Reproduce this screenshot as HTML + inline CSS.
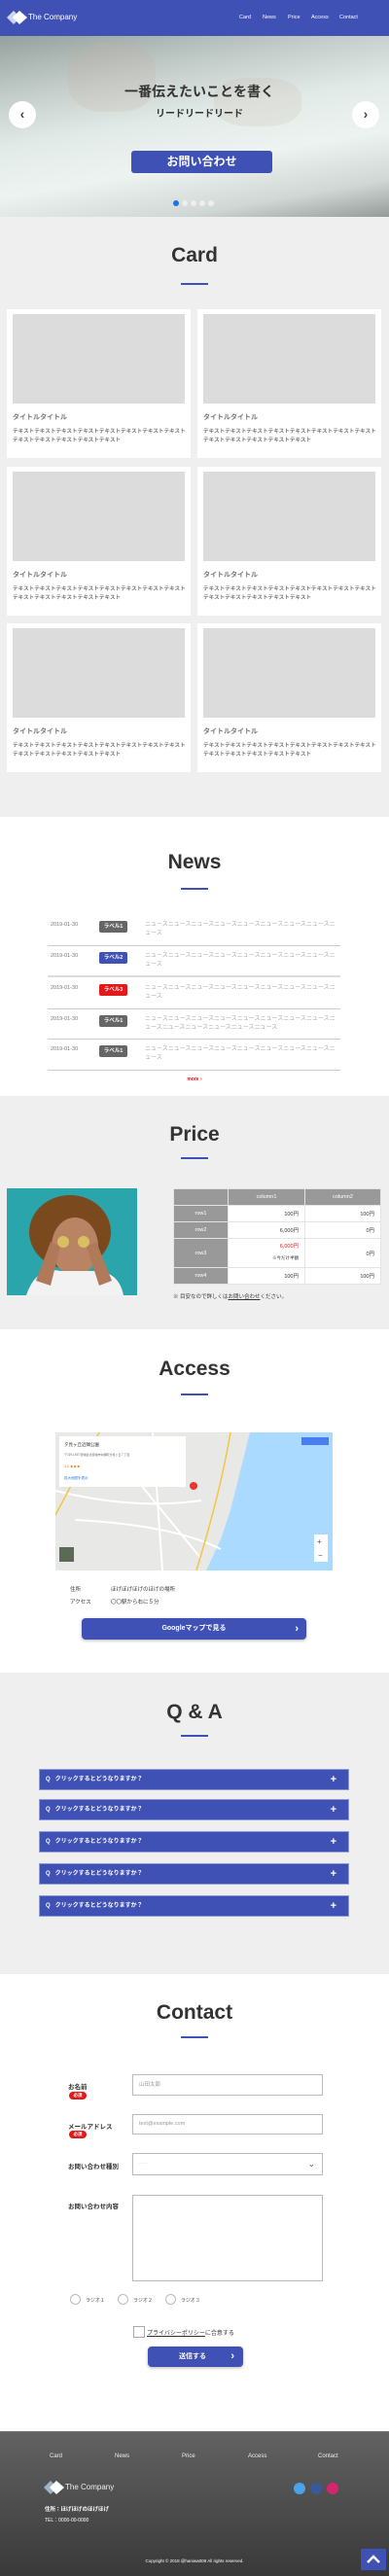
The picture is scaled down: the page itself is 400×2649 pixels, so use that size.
<!DOCTYPE html>
<html><head><meta charset="utf-8">
<style>
*{margin:0;padding:0;box-sizing:border-box}
body{width:400px;height:2649px;position:relative;font-family:"Liberation Sans","Noto Sans CJK JP",sans-serif;color:#333;overflow:hidden;background:#fff}
.a{position:absolute}
.sec{position:absolute;left:0;width:400px}
.h2{position:absolute;left:0;width:400px;text-align:center;font-size:21px;font-weight:bold;color:#333;line-height:24px}
.ln{position:absolute;left:186px;width:28px;height:2px;background:#3f51b5}
.card{position:absolute;width:189px;height:153px;background:#fff}
.card .im{position:absolute;left:6px;top:5px;width:177px;height:92px;background:#dcdcdc}
.card .t{position:absolute;left:6px;top:106px;font-size:7px;color:#777;font-weight:bold}
.card .x{position:absolute;left:6px;top:122px;width:180px;font-size:5.6px;line-height:9px;color:#777;font-weight:bold}
.nr{position:absolute;left:49px;width:301px;border-bottom:1px solid #ccc;height:32px}
.nr .d{position:absolute;left:3px;top:7px;font-size:5.5px;color:#777}
.nr .l{position:absolute;left:53px;top:6px;width:29px;height:12px;border-radius:2px;color:#fff;font-size:5.5px;text-align:center;line-height:12px;font-weight:bold}
.nr .n{position:absolute;left:100px;top:6px;width:200px;font-size:6px;line-height:9px;color:#aaa}
.q{position:absolute;left:40px;width:319px;height:22px;background:#3f51b5;border:1px solid #8e99d8;color:#fff;font-size:6px;font-weight:bold;line-height:20px;padding-left:6px}
.q b{position:absolute;right:12px;top:0;font-size:11px}
.lb{position:absolute;left:70px;font-size:6.5px;font-weight:bold;color:#333}
.rq{position:absolute;left:71px;width:18px;height:8px;border-radius:4px;background:#e21a1a;color:#fff;font-size:4.5px;text-align:center;line-height:8px;font-weight:bold}
.in{position:absolute;left:136px;width:196px;border:1px solid #bbb;background:#fff;font-size:5.5px;color:#999;padding-left:6px}
td{border:1px solid #e4e4e4;font-size:5.5px;height:17px}
.fn{position:absolute;top:2523px;font-size:6px;color:#eee}
</style></head><body>
<!-- header -->
<div class="sec" style="top:0;height:37px;background:#3f51b5"></div>
<svg class="a" style="left:7px;top:11px" width="22" height="14"><polygon points="0,7 7,0 14,7 7,14" fill="#cfd6ef"/><polygon points="6,7 13,0 21,7 13,14" fill="#fff"/></svg>
<div class="a" style="left:29px;top:13px;font-size:8px;color:#fff">The Company</div>
<div class="a" style="left:246px;top:15px;font-size:5.5px;color:#fff">Card</div>
<div class="a" style="left:270px;top:15px;font-size:5.5px;color:#fff">News</div>
<div class="a" style="left:296px;top:15px;font-size:5.5px;color:#fff">Price</div>
<div class="a" style="left:320px;top:15px;font-size:5.5px;color:#fff">Access</div>
<div class="a" style="left:349px;top:15px;font-size:5.5px;color:#fff">Contact</div>
<!-- hero -->
<div class="sec" style="top:37px;height:186px;background:linear-gradient(170deg,#95a19d 0%,#c4cdca 25%,#e2eae7 45%,#edf3f0 65%,#d0d7d4 85%,#959b98 100%)"></div>
<div class="a" style="left:70px;top:45px;width:90px;height:70px;border-radius:40%;background:rgba(200,175,165,.2)"></div>
<div class="a" style="left:220px;top:80px;width:90px;height:50px;border-radius:40%;background:rgba(200,175,165,.18)"></div>
<div class="a" style="left:0;top:84px;width:400px;text-align:center;font-size:14px;font-weight:bold;color:#333;padding-left:10px">一番伝えたいことを書く</div>
<div class="a" style="left:0;top:108px;width:400px;text-align:center;font-size:10px;font-weight:bold;color:#333;padding-left:10px">リードリードリード</div>
<div class="a" style="left:9px;top:104px;width:28px;height:28px;border-radius:50%;background:#fff;text-align:center;line-height:27px;font-size:14px;font-weight:bold;color:#444">&lsaquo;</div>
<div class="a" style="left:362px;top:104px;width:28px;height:28px;border-radius:50%;background:#fff;text-align:center;line-height:27px;font-size:14px;font-weight:bold;color:#444">&rsaquo;</div>
<div class="a" style="left:135px;top:155px;width:145px;height:23px;border-radius:3px;background:#3f51b5;color:#fff;text-align:center;font-size:12px;font-weight:bold;line-height:23px">お問い合わせ</div>
<div class="a" style="left:178px;top:206px;width:6px;height:6px;border-radius:50%;background:#1a73e8"></div>
<div class="a" style="left:187px;top:206px;width:6px;height:6px;border-radius:50%;background:#eee"></div>
<div class="a" style="left:196px;top:206px;width:6px;height:6px;border-radius:50%;background:#eee"></div>
<div class="a" style="left:205px;top:206px;width:6px;height:6px;border-radius:50%;background:#eee"></div>
<div class="a" style="left:214px;top:206px;width:6px;height:6px;border-radius:50%;background:#eee"></div>
<!-- card -->
<div class="sec" style="top:223px;height:617px;background:#efefef"></div>
<div class="h2" style="top:251px">Card</div><div class="ln" style="top:291px"></div>
<div class="card" style="left:7px;top:318px"><div class="im"></div><div class="t">タイトルタイトル</div><div class="x">テキストテキストテキストテキストテキストテキストテキストテキストテキストテキストテキストテキストテキスト</div></div>
<div class="card" style="left:203px;top:318px"><div class="im"></div><div class="t">タイトルタイトル</div><div class="x">テキストテキストテキストテキストテキストテキストテキストテキストテキストテキストテキストテキストテキスト</div></div>
<div class="card" style="left:7px;top:480px"><div class="im"></div><div class="t">タイトルタイトル</div><div class="x">テキストテキストテキストテキストテキストテキストテキストテキストテキストテキストテキストテキストテキスト</div></div>
<div class="card" style="left:203px;top:480px"><div class="im"></div><div class="t">タイトルタイトル</div><div class="x">テキストテキストテキストテキストテキストテキストテキストテキストテキストテキストテキストテキストテキスト</div></div>
<div class="card" style="left:7px;top:641px"><div class="im"></div><div class="t">タイトルタイトル</div><div class="x">テキストテキストテキストテキストテキストテキストテキストテキストテキストテキストテキストテキストテキスト</div></div>
<div class="card" style="left:203px;top:641px"><div class="im"></div><div class="t">タイトルタイトル</div><div class="x">テキストテキストテキストテキストテキストテキストテキストテキストテキストテキストテキストテキストテキスト</div></div>
<!-- news -->
<div class="h2" style="top:875px">News</div><div class="ln" style="top:913px"></div>
<div class="nr" style="top:941px"><div class="d">2019-01-30</div><div class="l" style="background:#666">ラベル1</div><div class="n">ニュースニュースニュースニュースニュースニュースニュースニュースニュース</div></div>
<div class="nr" style="top:973px;border-bottom:2px solid #ddd"><div class="d">2019-01-30</div><div class="l" style="background:#3f51b5">ラベル2</div><div class="n">ニュースニュースニュースニュースニュースニュースニュースニュースニュース</div></div>
<div class="nr" style="top:1006px"><div class="d">2019-01-30</div><div class="l" style="background:#e21a1a">ラベル3</div><div class="n">ニュースニュースニュースニュースニュースニュースニュースニュースニュース</div></div>
<div class="nr" style="top:1038px;height:31px"><div class="d">2019-01-30</div><div class="l" style="background:#666">ラベル1</div><div class="n">ニュースニュースニュースニュースニュースニュースニュースニュースニュースニュースニュースニュースニュースニュース</div></div>
<div class="nr" style="top:1069px"><div class="d">2019-01-30</div><div class="l" style="background:#666">ラベル1</div><div class="n">ニュースニュースニュースニュースニュースニュースニュースニュースニュース</div></div>
<div class="a" style="left:0;width:400px;top:1107px;text-align:center;font-size:5px;color:#e21a1a;font-weight:bold">more ›</div>
<!-- price -->
<div class="sec" style="top:1127px;height:240px;background:#efefef"></div>
<div class="h2" style="top:1155px">Price</div><div class="ln" style="top:1190px"></div>
<svg class="a" style="left:7px;top:1222px" width="134" height="110"><rect width="134" height="110" fill="#2aa5ab"/><ellipse cx="65" cy="45" rx="42" ry="38" fill="#7a4a1e"/><ellipse cx="70" cy="60" rx="24" ry="30" fill="#b98463"/><path d="M20 110 Q30 80 55 85 L90 85 Q115 85 120 110Z" fill="#f2f2f2"/><path d="M30 95 L45 55 L55 60 L45 100Z" fill="#b07a5a"/><path d="M108 95 L92 55 L82 60 L95 100Z" fill="#b07a5a"/><circle cx="58" cy="55" r="6" fill="#d8c060"/><circle cx="79" cy="55" r="6" fill="#d8c060"/></svg>
<table class="a" style="left:178px;top:1222px;width:214px;border-collapse:collapse;background:#fff;border:1px solid #ccc">
<tr style="background:#999;color:#fff;text-align:center"><td style="width:56px"></td><td style="width:79px">column1</td><td>column2</td></tr>
<tr><td style="background:#999;color:#fff;text-align:center">row1</td><td style="text-align:right;padding-right:6px">100円</td><td style="text-align:right;padding-right:6px">100円</td></tr>
<tr><td style="background:#999;color:#fff;text-align:center">row2</td><td style="text-align:right;padding-right:6px">6,000円</td><td style="text-align:right;padding-right:6px">0円</td></tr>
<tr style="height:30px"><td style="background:#999;color:#fff;text-align:center">row3</td><td style="text-align:right;padding-right:6px;line-height:11px"><span style="color:#e21a1a">6,000円</span><br><span style="font-size:4.5px">※今だけ半額</span></td><td style="text-align:right;padding-right:6px">0円</td></tr>
<tr><td style="background:#999;color:#fff;text-align:center">row4</td><td style="text-align:right;padding-right:6px">100円</td><td style="text-align:right;padding-right:6px">100円</td></tr>
</table>
<div class="a" style="left:178px;top:1329px;font-size:5.5px;color:#333">※ 目安なので詳しくは<u>お問い合わせ</u>ください。</div>
<!-- access -->
<div class="h2" style="top:1396px">Access</div><div class="ln" style="top:1433px"></div>
<svg class="a" style="left:57px;top:1473px" width="285" height="142"><rect width="285" height="142" fill="#e8e8e6"/><polygon points="185,0 285,0 285,142 155,142 170,110 180,80 190,40 200,0" fill="#aadaff"/><path d="M0 60 Q80 80 150 70 M20 90 Q120 95 170 120 M100 0 L110 142 M60 20 L150 130" stroke="#fff" stroke-width="2" fill="none"/><path d="M180 0 Q170 60 145 142" stroke="#f5c542" stroke-width="1.5" fill="none"/><path d="M45 0 L0 85" stroke="#f5c542" stroke-width="1.5" fill="none"/><rect x="4" y="4" width="130" height="52" fill="#fff"/><text x="9" y="14" font-size="4.5" fill="#333" font-family="Noto Sans CJK JP">夕見ヶ丘近隣公園</text><text x="9" y="24" font-size="3" fill="#666" font-family="Noto Sans CJK JP">〒319-1553 茨城県北茨城市中郷町汐見ヶ丘７丁目</text><text x="9" y="36" font-size="3.5" fill="#e8710a">3.2 ★★★</text><text x="9" y="48" font-size="3.5" fill="#1a73e8" font-family="Noto Sans CJK JP">拡大地図を表示</text><circle cx="142" cy="55" r="4" fill="#e33"/><rect x="253" y="5" width="28" height="8" fill="#4a7df0"/><rect x="266" y="105" width="14" height="28" fill="#fff"/><text x="269" y="115" font-size="8" fill="#555">+</text><text x="270" y="129" font-size="8" fill="#555">−</text><rect x="4" y="118" width="15" height="15" fill="#5a6a55"/></svg>
<div class="a" style="left:72px;top:1630px;font-size:5.5px;color:#333">住所</div><div class="a" style="left:114px;top:1630px;font-size:5.5px;color:#333">ほげほげほげのほげの場所</div>
<div class="a" style="left:72px;top:1643px;font-size:5.5px;color:#333">アクセス</div><div class="a" style="left:114px;top:1643px;font-size:5.5px;color:#333">〇〇駅から右に５分</div>
<div class="a" style="left:84px;top:1664px;width:231px;height:22px;border-radius:4px;background:#3f51b5;color:#fff;text-align:center;font-size:7px;font-weight:bold;line-height:22px;box-shadow:0 1px 3px rgba(0,0,0,.3)">Googleマップで見る<span style="position:absolute;right:8px;font-size:11px">›</span></div>
<!-- qa -->
<div class="sec" style="top:1720px;height:310px;background:#efefef"></div>
<div class="h2" style="top:1749px">Q &amp; A</div><div class="ln" style="top:1784px"></div>
<div class="q" style="top:1819px">Q&nbsp;&nbsp;&nbsp;クリックするとどうなりますか？<b>+</b></div>
<div class="q" style="top:1850px">Q&nbsp;&nbsp;&nbsp;クリックするとどうなりますか？<b>+</b></div>
<div class="q" style="top:1883px">Q&nbsp;&nbsp;&nbsp;クリックするとどうなりますか？<b>+</b></div>
<div class="q" style="top:1916px">Q&nbsp;&nbsp;&nbsp;クリックするとどうなりますか？<b>+</b></div>
<div class="q" style="top:1949px">Q&nbsp;&nbsp;&nbsp;クリックするとどうなりますか？<b>+</b></div>
<!-- contact -->
<div class="h2" style="top:2058px">Contact</div><div class="ln" style="top:2094px"></div>
<div class="lb" style="top:2140px">お名前</div><div class="rq" style="top:2151px">必須</div>
<div class="in" style="top:2133px;height:22px;line-height:20px">山田太郎</div>
<div class="lb" style="top:2181px">メールアドレス</div><div class="rq" style="top:2191px">必須</div>
<div class="in" style="top:2174px;height:21px;line-height:19px">text@example.com</div>
<div class="lb" style="top:2222px">お問い合わせ種別</div>
<div class="in" style="top:2214px;height:23px;line-height:21px;color:#ccc">- - -<span style="position:absolute;right:7px;color:#555;font-size:9px">⌄</span></div>
<div class="lb" style="top:2263px">お問い合わせ内容</div>
<div class="in" style="top:2257px;height:89px"></div>
<div class="a" style="left:72px;top:2359px;width:11px;height:11px;border:1px solid #bbb;border-radius:50%"></div><div class="a" style="left:88px;top:2362px;font-size:5px;color:#555">ラジオ１</div>
<div class="a" style="left:121px;top:2359px;width:11px;height:11px;border:1px solid #bbb;border-radius:50%"></div><div class="a" style="left:137px;top:2362px;font-size:5px;color:#555">ラジオ２</div>
<div class="a" style="left:170px;top:2359px;width:11px;height:11px;border:1px solid #bbb;border-radius:50%"></div><div class="a" style="left:186px;top:2362px;font-size:5px;color:#555">ラジオ３</div>
<div class="a" style="left:137px;top:2392px;width:12px;height:12px;border:1px solid #aaa;background:#fff"></div>
<div class="a" style="left:151px;top:2394px;font-size:6px;color:#333"><u>プライバシーポリシー</u>に合意する</div>
<div class="a" style="left:152px;top:2413px;width:98px;height:21px;border-radius:4px;background:#3f51b5;color:#fff;font-size:7px;font-weight:bold;line-height:21px;padding-left:32px;box-shadow:0 1px 3px rgba(0,0,0,.3)">送信する<span style="position:absolute;right:9px;font-size:11px">›</span></div>
<!-- footer -->
<div class="sec" style="top:2500px;height:149px;background:linear-gradient(#626262,#393939);border-top:1px solid #777"></div>
<div class="fn" style="left:51px">Card</div><div class="fn" style="left:118px">News</div><div class="fn" style="left:187px">Price</div><div class="fn" style="left:255px">Access</div><div class="fn" style="left:327px">Contact</div>
<svg class="a" style="left:45px;top:2551px" width="22" height="14"><polygon points="0,7 7,0 14,7 7,14" fill="#9fb3c8"/><polygon points="6,7 13,0 21,7 13,14" fill="#fff"/></svg>
<div class="a" style="left:67px;top:2553px;font-size:8px;color:#eee">The Company</div>
<div class="a" style="left:46px;top:2576px;font-size:5.5px;color:#fff;font-weight:bold">住所：ほげほげのほげほげ</div>
<div class="a" style="left:46px;top:2588px;font-size:5px;color:#fff">TEL：0000-00-0000</div>
<div class="a" style="left:302px;top:2553px;width:12px;height:12px;border-radius:50%;background:#4aa3e8"></div>
<div class="a" style="left:319px;top:2553px;width:12px;height:12px;border-radius:50%;background:#3b5998"></div>
<div class="a" style="left:336px;top:2553px;width:12px;height:12px;border-radius:50%;background:#d6246e"></div>
<div class="a" style="left:0;width:400px;top:2631px;text-align:center;font-size:4.5px;color:#fff">Copyright © 2018 @haniwa008 All rights reserved.</div>
<div class="a" style="left:371px;top:2621px;width:26px;height:22px;background:#3f51b5"><svg width="26" height="22"><path d="M7 14 L13 8 L19 14" stroke="#fff" stroke-width="2.5" fill="none"/></svg></div>
</body></html>
